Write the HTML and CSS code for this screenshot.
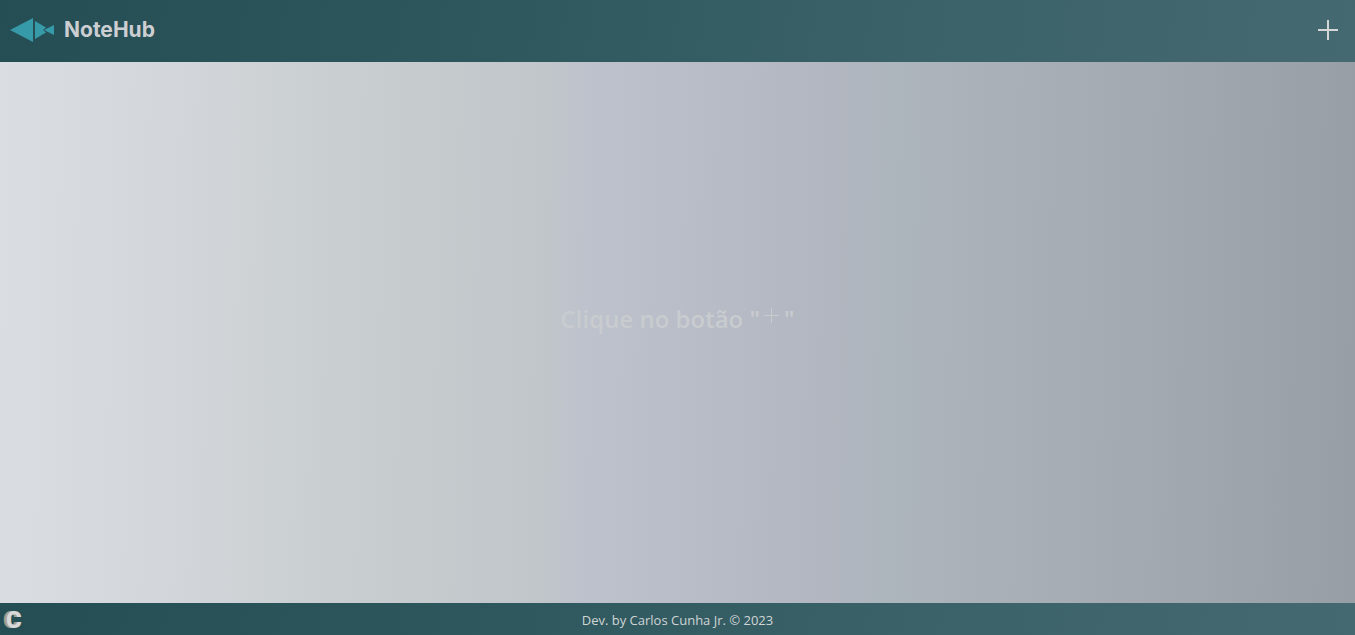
FILE: index.html
```html
<!DOCTYPE html>
<html lang="pt-BR">
<head>
<meta charset="utf-8">
<meta name="viewport" content="width=device-width, initial-scale=1">
<title>NoteHub</title>
<link rel="stylesheet" href="styles.css">
</head>
<body>
<header class="header">
  <a class="brand" href="#">
    <svg class="brand-icon" viewBox="0 0 46 26" aria-hidden="true">
      <path d="M0 13 23 1V25Z"/>
      <path d="M25 4 36 10.500 33 13 36 15.500 25 22Z"/>
      <path d="M34 13 44 8V18Z"/>
    </svg>
    <span class="brand-name">NoteHub</span>
  </a>
  <button class="add" type="button" aria-label="Adicionar nota">
    <svg class="add-icon" viewBox="0 0 20 20" aria-hidden="true"><path d="M10 0V20M0 10H20"/></svg>
  </button>
</header>
<main class="board">
  <p class="hint">Clique no botão "<svg class="hint-icon" viewBox="0 0 16 16" role="img" aria-label="+"><path d="M7.500 0V15M0 7.500H15"/></svg>"</p>
</main>
<footer class="footer">
  <a class="author" href="#" aria-label="Carlos Cunha Jr.">C</a>
  <p class="credit">Dev. by Carlos Cunha Jr. © 2023</p>
</footer>
</body>
</html>
```
FILE: styles.css
```css
* {
  box-sizing: border-box;
  margin: 0;
}

body {
  display: flex;
  flex-direction: column;
  min-height: 100vh;
  font-family: "Open Sans", sans-serif;
}

.header,
.footer {
  background: linear-gradient(100deg, #244e54, #2d565d 35%, #3a6168 65%, #456971);
}

.header {
  display: flex;
  align-items: center;
  justify-content: space-between;
  height: 62px;
  padding: 0 15px 2px 10px;
}

.brand {
  display: flex;
  align-items: center;
  gap: 8px;
  color: #cdced2;
  text-decoration: none;
}

.brand-icon {
  width: 46px;
  height: 26px;
  fill: #379aa9;
}

.brand-name {
  font: 700 21px/24px Inter, sans-serif;
}

.add {
  display: flex;
  padding: 2px;
  border: 0;
  background: none;
  cursor: pointer;
}

.add-icon {
  width: 20px;
  height: 20px;
  fill: none;
  stroke: #d5d5d7;
  stroke-width: 2;
}

.board {
  display: flex;
  flex: 1;
  align-items: center;
  justify-content: center;
  padding-bottom: 28px;
  background: linear-gradient(91deg, #dadde2, #d3d7db 12%, #c9ced1 25%, #c1c6ca 40%, #bec2cc 43%, #b2b6c0 61%, #adb5bd 65%, #a2a9b1 85%, #979ea5);
}

.hint {
  color: #c8cccf;
  font-size: 24px;
  font-weight: 600;
  line-height: 32px;
}

.hint-icon {
  width: 16px;
  height: 16px;
  margin: 0 4px 4px;
  fill: none;
  stroke: currentColor;
}

.footer {
  display: grid;
  grid-template-columns: 1fr auto 1fr;
  align-items: center;
  height: 32px;
  padding: 2px 6px 0;
}

.author {
  justify-self: start;
  color: #d6d8d9;
  font: 900 24px/28px Roboto, sans-serif;
  text-decoration: none;
  text-shadow: -3px 0 0 #a69f8c;
}

.credit {
  color: #d0d5d5;
  font-size: 13px;
  line-height: 20px;
}
```
